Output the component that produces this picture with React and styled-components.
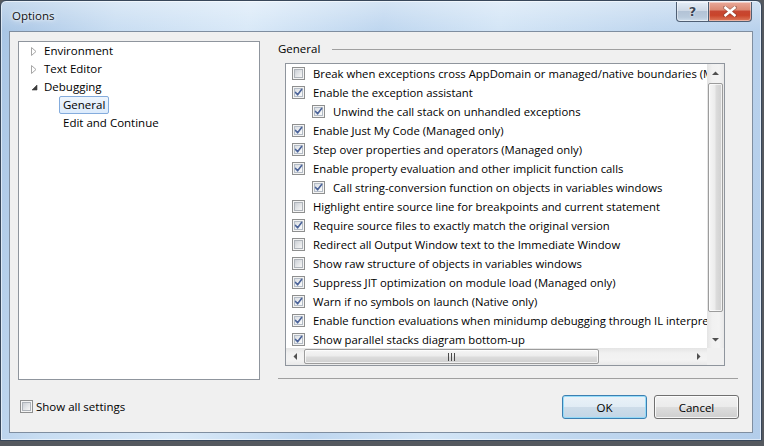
import React from 'react';
import styled, { createGlobalStyle } from 'styled-components';

const Global = createGlobalStyle`
  html, body { margin: 0; padding: 0; }
  body {
    width: 764px; height: 446px; overflow: hidden;
    background: #55595f;
    font-family: "Open Sans", "Noto Sans", sans-serif;
    font-size: 11.5px;
    color: #000;
  }
  #root { width: 764px; height: 446px; }
`;

const Window = styled.div`
  box-sizing: border-box;
  width: 762px;
  height: 441px;
  border: 1px solid #38475a;
  border-radius: 6px 6px 0 0;
  padding: 0 8px 7px 8px;
  display: flex;
  flex-direction: column;
  background:
    linear-gradient(180deg, rgba(255,255,255,0.35) 0px, rgba(255,255,255,0) 30px),
    linear-gradient(100deg, #a7c4e4 0%, #c8ddf2 14%, #d9e9f8 30%, #bed6ef 46%, #d3e5f6 60%, #c0d7ef 78%, #b3cdea 100%);
  box-shadow: inset 0 0 0 1px rgba(255,255,255,0.55);
`;

const TitleBar = styled.div`
  height: 30px;
  display: flex;
  align-items: flex-start;
  margin: 0 0 0 -1px;
`;

const Title = styled.div`
  padding: 7px 0 0 4px;
  font-size: 11.5px;
  color: #111;
  text-shadow: 0 0 6px rgba(255,255,255,0.95), 0 0 3px rgba(255,255,255,0.9);
  flex: 1;
`;

const CaptionButtons = styled.div`
  display: flex;
  margin-right: 1px;
  margin-top: 1px;
`;

const CaptionButton = styled.div`
  box-sizing: border-box;
  height: 20px;
  width: ${p => p.$w}px;
  display: flex;
  align-items: center;
  justify-content: center;
  border: 1px solid #4f5f74;
  border-top: none;
  border-left: ${p => (p.$close ? 'none' : '1px solid #4f5f74')};
  border-radius: ${p => (p.$close ? '0 0 4px 0' : '0 0 0 4px')};
  background: ${p => p.$close
    ? 'linear-gradient(180deg, #e9a99a 0%, #dc8a74 40%, #c74631 50%, #c9442a 70%, #dd7a5c 100%)'
    : 'linear-gradient(180deg, #e4edf7 0%, #ced9e6 45%, #b3c3d6 50%, #b9cadc 80%, #cfdeed 100%)'};
  box-shadow: inset 0 0 0 1px rgba(255,255,255,0.45);
  color: #3b4656;
  font-family: "DejaVu Sans", sans-serif;
  font-weight: bold;
  font-size: 13px;
  text-shadow: 0 0 2px #fff, 0 0 1px #fff;
`;

const Client = styled.div`
  flex: 1;
  box-sizing: border-box;
  border: 1px solid #7f8ea0;
  background: #f0f0f0;
  display: flex;
  flex-direction: column;
  padding: 9px 14px 0 8px;
`;

const Main = styled.div`
  display: flex;
  height: 339px;
  gap: 18px;
`;

const Tree = styled.div`
  box-sizing: border-box;
  width: 242px;
  height: 100%;
  background: #fff;
  border: 1px solid #8f959d;
  padding-top: 0;
`;

const TreeRow = styled.div`
  display: flex;
  align-items: center;
  height: 18px;
  padding-left: ${p => 9 + p.$depth * 19}px;
`;

const ArrowSlot = styled.span`
  width: 12px;
  flex: none;
  display: flex;
  align-items: center;
  padding-left: 3px;
  box-sizing: border-box;
`;

const TreeLabel = styled.span`
  box-sizing: border-box;
  height: 18px;
  line-height: 16px;
  padding: 0 3px;
  border: 1px solid ${p => (p.$selected ? '#84acdd' : 'transparent')};
  border-radius: 2px;
  background: ${p => (p.$selected ? 'linear-gradient(180deg, #eef5fd 0%, #dcebfc 100%)' : 'transparent')};
  white-space: nowrap;
`;

const Panel = styled.div`
  width: 460px;
  display: flex;
  flex-direction: column;
`;

const GroupHeader = styled.div`
  display: flex;
  align-items: center;
  height: 15px;
`;

const GroupLine = styled.div`
  flex: 1;
  height: 1px;
  background: #a0a0a0;
  margin: 1px 7px 0 12px;
`;

const ListBox = styled.div`
  box-sizing: border-box;
  margin: 7px 13px 0 7px;
  height: 303px;
  border: 1px solid #8f959d;
  background: #fff;
  display: grid;
  grid-template-columns: 1fr 17px;
  grid-template-rows: 1fr 17px;
  font-size: 11.3px;
`;

const Rows = styled.div`
  overflow: hidden;
`;

const OptionRow = styled.label`
  display: flex;
  align-items: center;
  height: 19px;
  padding-left: ${p => 6 + p.$indent * 20}px;
  white-space: nowrap;
  gap: 8px;
`;

const Box = styled.span`
  position: relative;
  flex: none;
  box-sizing: border-box;
  width: 13px;
  height: 13px;
  border: 1px solid #8e8f8f;
  background: #f4f4f4;
  &::before {
    content: "";
    position: absolute;
    left: 1px; top: 1px; right: 1px; bottom: 1px;
    border: 1px solid ${p => (p.$checked ? '#b4bcc6' : '#aeb3b9')};
    background: ${p => (p.$checked
      ? 'linear-gradient(135deg, #d9dde2 0%, #eef0f2 55%, #fbfbfb 100%)'
      : 'linear-gradient(135deg, #cbcfd5 0%, #e4e6e8 55%, #f6f6f6 100%)')};
  }
`;

const CheckMark = styled.svg`
  position: absolute;
  left: -1px;
  top: -1px;
`;

const VScroll = styled.div`
  display: flex;
  flex-direction: column;
  background: linear-gradient(90deg, #e4e4e4 0%, #f1f1f1 30%, #f3f3f3 70%, #e9e9e9 100%);
`;

const HScroll = styled.div`
  display: flex;
  align-items: stretch;
  background: linear-gradient(180deg, #e4e4e4 0%, #f1f1f1 30%, #f3f3f3 70%, #e9e9e9 100%);
`;

const Corner = styled.div`
  background: #f0f0f0;
`;

const ScrollArrow = styled.div`
  flex: none;
  width: 17px;
  height: 17px;
  display: flex;
  align-items: center;
  justify-content: center;
`;

const Thumb = styled.div`
  box-sizing: border-box;
  flex: none;
  border: 1px solid #9c9c9c;
  border-radius: 2px;
  display: flex;
  align-items: center;
  justify-content: center;
  ${p => (p.$vertical
    ? `width: 15px; height: 229px; margin: 2px 1px 0 1px;
       background: linear-gradient(90deg, #f6f6f6 0%, #ececec 45%, #dcdcdc 55%, #cfcfcf 100%);`
    : `height: 15px; width: 295px; margin: 1px 0 1px 1px;
       background: linear-gradient(180deg, #f6f6f6 0%, #ececec 45%, #dcdcdc 55%, #cfcfcf 100%);`)}
  box-shadow: inset 0 0 0 1px rgba(255,255,255,0.7);
`;

const Spacer = styled.div`
  flex: 1;
`;

const BottomRule = styled.div`
  margin-top: auto;
  margin-bottom: 1px;
  height: 1px;
  background: #a0a0a0;
`;

const Footer = styled.div`
  flex: 1;
  display: flex;
  align-items: center;
  padding: 0 0 0 2px;
  margin-right: -1px;
`;

const FooterCheck = styled.label`
  display: flex;
  align-items: center;
  gap: 3px;
  flex: 1;
  font-size: 11.5px;
  margin-top: 1px;
`;

const Button = styled.button`
  box-sizing: border-box;
  width: 85px;
  height: 24px;
  margin-left: ${p => (p.$first ? 0 : 7)}px;
  margin-top: 2px;
  font-family: inherit;
  font-size: 11.5px;
  color: #000;
  border-radius: 3px;
  border: 1px solid ${p => (p.$default ? '#3c7fb1' : '#707070')};
  background: ${p => (p.$default
    ? 'linear-gradient(180deg, #eaf2f8 0%, #e1ecf5 48%, #cddce9 52%, #c3d6e6 100%)'
    : 'linear-gradient(180deg, #f2f2f2 0%, #ebebeb 48%, #dddddd 52%, #cfcfcf 100%)')};
  box-shadow: inset 0 0 0 1px ${p => (p.$default ? 'rgba(142,217,248,0.9)' : 'rgba(255,255,255,0.8)')};
  padding: 0;
`;

const Collapsed = () => (
  <svg width="6" height="9" viewBox="0 0 6 9">
    <path d="M0.5 0.5 L5 4.5 L0.5 8.5 Z" fill="#fff" stroke="#a6a6a6" strokeWidth="1" />
  </svg>
);

const Expanded = () => (
  <svg width="7" height="7" viewBox="0 0 7 7">
    <path d="M6 1 L6 6 L1 6 Z" fill="#3c3c3c" stroke="#3c3c3c" strokeWidth="0.6" />
  </svg>
);

const Tri = ({ dir }) => {
  const paths = {
    up: 'M0 4 L3.5 0.5 L7 4 Z',
    down: 'M0 0 L3.5 3.5 L7 0 Z',
    left: 'M4 0 L0.5 3.5 L4 7 Z',
    right: 'M0 0 L3.5 3.5 L0 7 Z',
  };
  const vert = dir === 'up' || dir === 'down';
  return (
    <svg width={vert ? 7 : 4} height={vert ? 4 : 7} viewBox={vert ? '0 0 7 4' : '0 0 4 7'}>
      <path d={paths[dir]} fill="#505050" />
    </svg>
  );
};

const Gripper = () => (
  <svg width="8" height="8" viewBox="0 0 8 8">
    {[0.5, 3.5, 6.5].map(x => (
      <line key={x} x1={x} y1="0" x2={x} y2="8" stroke="#4a4a4a" />
    ))}
  </svg>
);

const CheckBox = ({ checked }) => (
  <Box $checked={checked}>
    {checked && (
      <CheckMark width="13" height="13" viewBox="0 0 13 13">
        <path d="M3.6 6.4 L5.6 8.8 L9.6 3.4" fill="none" stroke="#4b6399" strokeWidth="1.6" strokeLinejoin="round" strokeLinecap="round" />
      </CheckMark>
    )}
  </Box>
);

const tree = [
  { label: 'Environment', depth: 0, state: 'collapsed' },
  { label: 'Text Editor', depth: 0, state: 'collapsed' },
  { label: 'Debugging', depth: 0, state: 'expanded' },
  { label: 'General', depth: 1, selected: true },
  { label: 'Edit and Continue', depth: 1 },
];

const options = [
  { label: 'Break when exceptions cross AppDomain or managed/native boundaries (Managed only)', checked: false, indent: 0 },
  { label: 'Enable the exception assistant', checked: true, indent: 0 },
  { label: 'Unwind the call stack on unhandled exceptions', checked: true, indent: 1 },
  { label: 'Enable Just My Code (Managed only)', checked: true, indent: 0 },
  { label: 'Step over properties and operators (Managed only)', checked: true, indent: 0 },
  { label: 'Enable property evaluation and other implicit function calls', checked: true, indent: 0 },
  { label: 'Call string-conversion function on objects in variables windows', checked: true, indent: 1 },
  { label: 'Highlight entire source line for breakpoints and current statement', checked: false, indent: 0 },
  { label: 'Require source files to exactly match the original version', checked: true, indent: 0 },
  { label: 'Redirect all Output Window text to the Immediate Window', checked: false, indent: 0 },
  { label: 'Show raw structure of objects in variables windows', checked: false, indent: 0 },
  { label: 'Suppress JIT optimization on module load (Managed only)', checked: true, indent: 0 },
  { label: 'Warn if no symbols on launch (Native only)', checked: true, indent: 0 },
  { label: 'Enable function evaluations when minidump debugging through IL interpreter', checked: true, indent: 0 },
  { label: 'Show parallel stacks diagram bottom-up', checked: true, indent: 0 },
];

export default function App() {
  return (
    <>
      <Global />
      <Window>
        <TitleBar>
          <Title>Options</Title>
          <CaptionButtons>
            <CaptionButton $w={33}>?</CaptionButton>
            <CaptionButton $w={43} $close>
              <svg width="14" height="11" viewBox="0 0 14 11">
                <path d="M2 1.5 L12 9.5 M12 1.5 L2 9.5" stroke="#4a2a24" strokeWidth="4" strokeLinecap="round" opacity="0.35" />
                <path d="M2.5 1.8 L11.5 9.2 M11.5 1.8 L2.5 9.2" stroke="#fff" strokeWidth="2.6" strokeLinecap="square" />
              </svg>
            </CaptionButton>
          </CaptionButtons>
        </TitleBar>
        <Client>
          <Main>
            <Tree>
              {tree.map(item => (
                <TreeRow key={item.label} $depth={item.depth}>
                  <ArrowSlot>
                    {item.state === 'collapsed' && <Collapsed />}
                    {item.state === 'expanded' && <Expanded />}
                  </ArrowSlot>
                  <TreeLabel $selected={item.selected}>{item.label}</TreeLabel>
                </TreeRow>
              ))}
            </Tree>
            <Panel>
              <GroupHeader>
                <span>General</span>
                <GroupLine />
              </GroupHeader>
              <ListBox>
                <Rows>
                  {options.map(o => (
                    <OptionRow key={o.label} $indent={o.indent}>
                      <CheckBox checked={o.checked} />
                      <span>{o.label}</span>
                    </OptionRow>
                  ))}
                </Rows>
                <VScroll>
                  <ScrollArrow><Tri dir="up" /></ScrollArrow>
                  <Thumb $vertical />
                  <Spacer />
                  <ScrollArrow><Tri dir="down" /></ScrollArrow>
                </VScroll>
                <HScroll>
                  <ScrollArrow><Tri dir="left" /></ScrollArrow>
                  <Thumb><Gripper /></Thumb>
                  <Spacer />
                  <ScrollArrow><Tri dir="right" /></ScrollArrow>
                </HScroll>
                <Corner />
              </ListBox>
              <BottomRule />
            </Panel>
          </Main>
          <Footer>
            <FooterCheck>
              <CheckBox checked={false} />
              <span>Show all settings</span>
            </FooterCheck>
            <Button $default $first>OK</Button>
            <Button>Cancel</Button>
          </Footer>
        </Client>
      </Window>
    </>
  );
}
